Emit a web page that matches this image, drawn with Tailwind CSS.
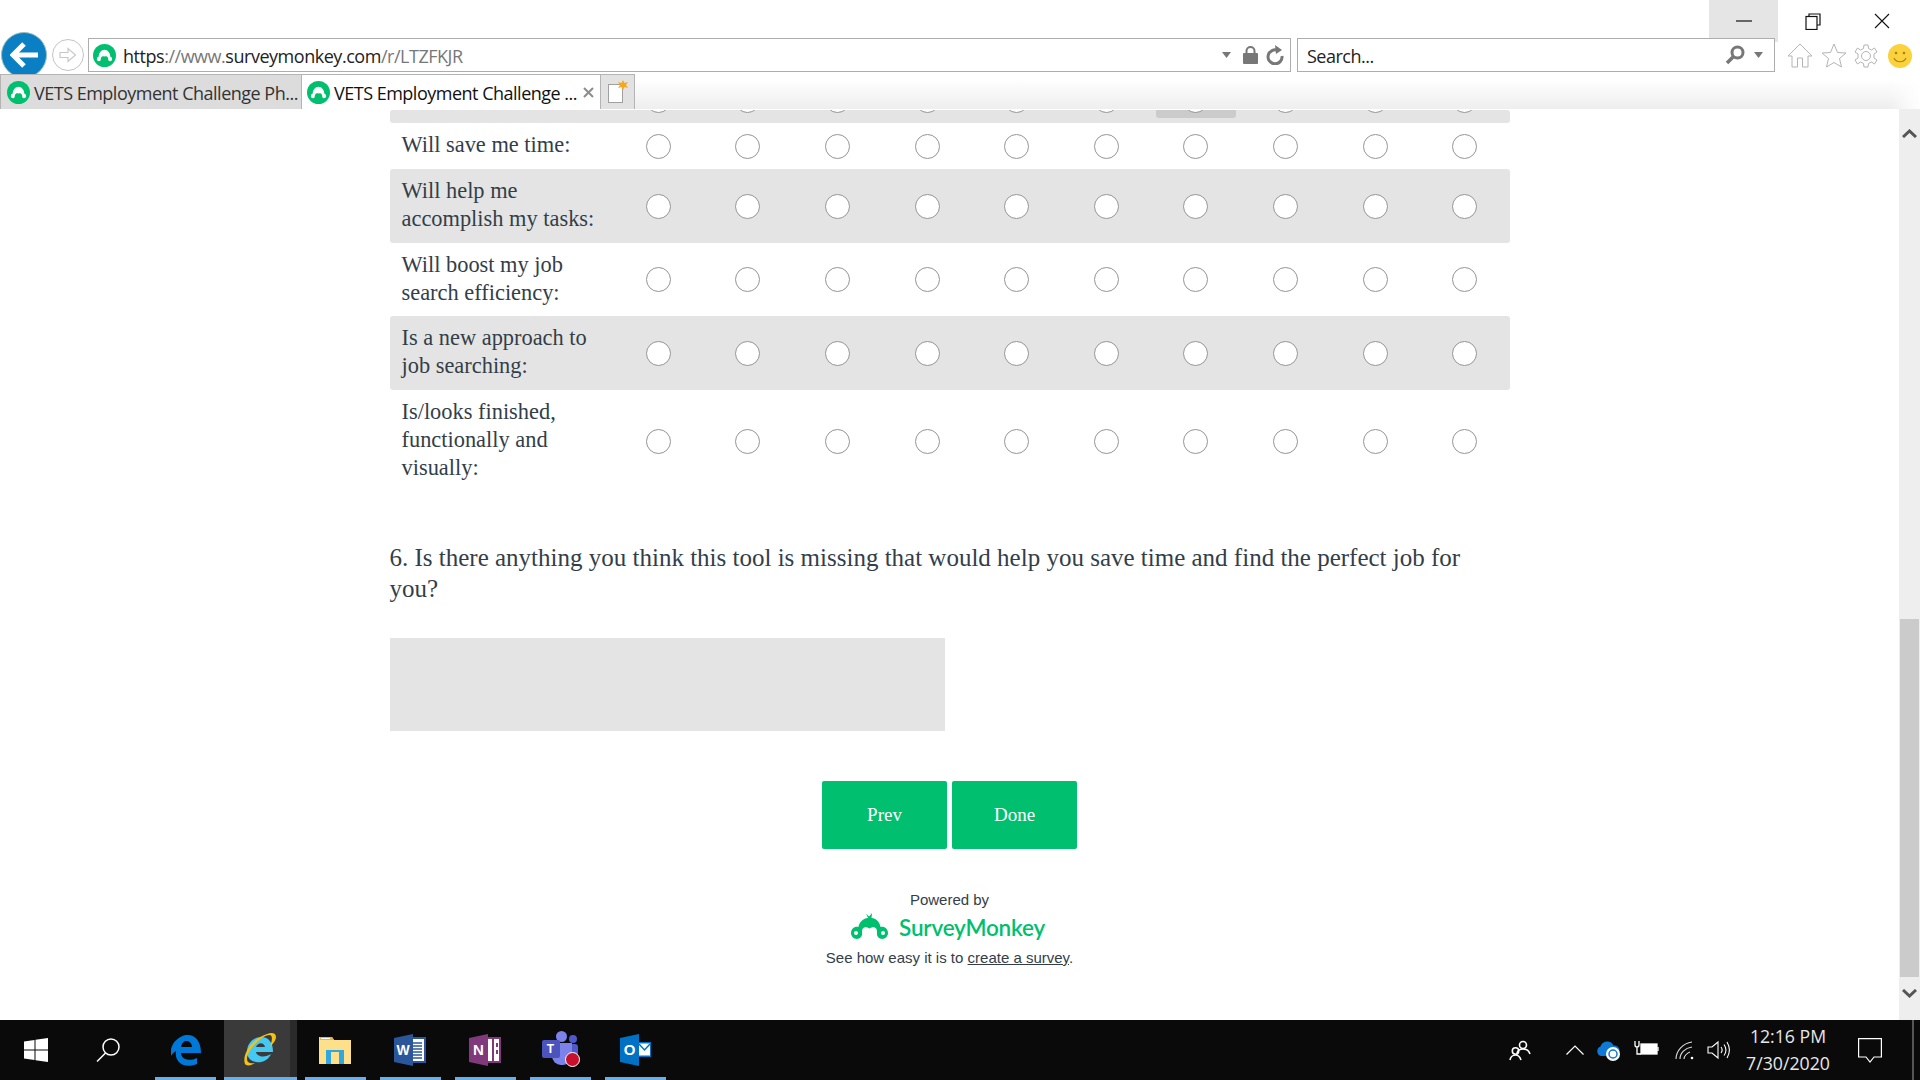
<!DOCTYPE html>
<html lang="en">
<head>
    <meta charset="UTF-8">
    <title>VETS Employment Challenge</title>
    <script src="https://cdn.jsdelivr.net/npm/@tailwindcss/browser@4"></script>
</head>
<body class="h-screen w-screen overflow-hidden flex flex-col bg-white font-['Open_Sans',sans-serif]">

    <!-- browser chrome -->
    <header class="h-[109px] shrink-0 flex flex-col bg-white relative z-10">
        <div class="h-[38px] flex justify-end pr-[4px]">
            <div class="w-[69px] h-[42px] bg-[#e5e5e5] flex items-center justify-center">
                <svg width="16" height="2"><path d="M0 1H16" stroke="#111" stroke-width="1.2"/></svg>
            </div>
            <div class="w-[69px] h-[42px] flex items-center justify-center">
                <svg width="16" height="17" fill="none" stroke="#111" stroke-width="1.2"><path d="M4 3V1H15V12H12"/><rect x="1" y="3.5" width="11" height="13"/></svg>
            </div>
            <div class="w-[69px] h-[42px] flex items-center justify-center">
                <svg width="16" height="16" stroke="#111" stroke-width="1.1"><path d="M1 1L15 15M15 1L1 15"/></svg>
            </div>
        </div>
        <div class="h-[36px] flex items-start relative z-0">
            <div class="w-[46px] h-[46px] rounded-full bg-[#0a7fc4] border border-[#9bb] flex items-center justify-center ml-px -mt-[6px] shrink-0">
                <svg width="28" height="26" fill="none" stroke="#fff" stroke-width="5"><path d="M14 2L3 13L14 24M3 13H28"/></svg>
            </div>
            <div class="w-[32px] h-[32px] rounded-full border border-[#c4c4c4] flex items-center justify-center ml-[5px] mt-[1px] shrink-0">
                <svg width="18" height="16" fill="none" stroke="#c8c8c8" stroke-width="1.2"><path d="M1 5.5H9V1.5L16.5 8L9 14.5V10.5H1Z"/></svg>
            </div>
            <div class="ml-[4px] w-[1203px] h-[34px] border border-[#adadad] bg-white flex items-center pl-[4px] relative z-10">
                <svg width="23" height="23" viewBox="0 0 24 24"><circle cx="12" cy="12" r="12" fill="#00bf6f"/><path d="M4 16a3 3 0 0 1 2-3C6 9 9 6 12 6s6 3 6 7a3 3 0 0 1 2 3c0 2-3 3-4 1 0-3-1-5-4-4-3-1-4 1-4 4-1 2-4 1-4-1Z" fill="#fff"/></svg>
                <span class="ml-[7px] pt-[2px] text-[18px] tracking-[-0.47px] text-[#777]"><span class="text-[#222]">https</span>://www.<span class="text-[#222]">surveymonkey.com</span>/r/LTZFKJR</span>
                <div class="ml-auto flex items-center pr-[6px]">
                    <svg width="9" height="6" fill="#777"><path d="M0 0H9L4.500 6Z"/></svg>
                    <svg class="ml-[12px]" width="15" height="18"><path d="M3.500 8V5a4 4 0 0 1 8 0v3" fill="none" stroke="#777" stroke-width="2"/><rect y="7" width="15" height="11" rx="1" fill="#777"/></svg>
                    <svg class="ml-[8px]" width="18" height="20" fill="none" stroke="#777" stroke-width="3"><path d="M12 5.500A7 7 0 1 0 16 11"/><path d="M9 0L16 5L10 9Z" fill="#777" stroke="none"/></svg>
                </div>
            </div>
            <div class="ml-[6px] w-[478px] h-[34px] border border-[#adadad] bg-white flex items-center pl-[9px] relative z-10">
                <span class="pt-[2px] text-[18px] tracking-[-0.5px] text-[#222]">Search...</span>
                <svg class="ml-auto" width="20" height="20" fill="none" stroke="#777"><circle cx="12.500" cy="7.500" r="5.500" stroke-width="3"/><path d="M8.500 11.500L2 18" stroke-width="3.500"/></svg>
                <svg class="ml-[9px] mr-[11px]" width="9" height="6" fill="#777"><path d="M0 0H9L4.500 6Z"/></svg>
            </div>
            <div class="ml-[12px] flex items-center gap-[7.500px] mt-[5px]">
                <svg width="26" height="25" fill="none" stroke="#b4b4b4"><path d="M13 1L1 13H5V24H10.500V15H15.500V24H21V13H25Z"/></svg>
                <svg width="26" height="25" fill="none" stroke="#b4b4b4"><path d="M13 1L16.500 9.500L25 10L18.500 15.500L20.500 24L13 19.500L5.500 24L7.500 15.500L1 10L9.500 9.500Z"/></svg>
                <svg width="24" height="24" fill="none" stroke="#b4b4b4"><circle cx="12" cy="12" r="4.500"/><path d="M10 1H14L14.500 4.500L17.500 6L20.500 4L23 8L20 10L20 14L23 16L20.500 20L17.500 18L14.500 19.500L14 23H10L9.500 19.500L6.500 18L3.500 20L1 16L4 14L4 10L1 8L3.500 4L6.500 6L9.500 4.500Z"/></svg>
                <svg width="24" height="24" class="ml-[2px]"><circle cx="12" cy="12" r="12" fill="#fbd13c"/><circle cx="8" cy="9" r="1.300" fill="#a5811c"/><circle cx="16" cy="9" r="1.300" fill="#a5811c"/><path d="M6 14c2 5 10 5 12 0" fill="none" stroke="#a5811c" stroke-width="1.200"/></svg>
            </div>
        </div>
        <nav class="h-[35px] flex relative z-20 bg-gradient-to-b from-white from-[15%] to-[#eeeeee]">
            <div class="w-[301px] h-full bg-[#dcdcdc] border-t border-l border-[#b4b4b4] flex items-center pl-[6px]">
                <svg width="23" height="23" viewBox="0 0 24 24"><circle cx="12" cy="12" r="12" fill="#00bf6f"/><path d="M4 16a3 3 0 0 1 2-3C6 9 9 6 12 6s6 3 6 7a3 3 0 0 1 2 3c0 2-3 3-4 1 0-3-1-5-4-4-3-1-4 1-4 4-1 2-4 1-4-1Z" fill="#fff"/></svg>
                <span class="ml-[4px] pt-[2px] text-[18px] tracking-[-0.5px] text-[#333] whitespace-nowrap">VETS Employment Challenge Ph...</span>
            </div>
            <div class="w-[299px] h-full bg-white border-t border-l border-[#b4b4b4] flex items-center pl-[5px]">
                <svg width="23" height="23" viewBox="0 0 24 24"><circle cx="12" cy="12" r="12" fill="#00bf6f"/><path d="M4 16a3 3 0 0 1 2-3C6 9 9 6 12 6s6 3 6 7a3 3 0 0 1 2 3c0 2-3 3-4 1 0-3-1-5-4-4-3-1-4 1-4 4-1 2-4 1-4-1Z" fill="#fff"/></svg>
                <span class="ml-[4px] pt-[2px] text-[18px] tracking-[-0.5px] text-[#111] whitespace-nowrap">VETS Employment Challenge ...</span>
                <svg class="ml-auto mr-[6px]" width="11" height="11" stroke="#8c8c8c" stroke-width="2"><path d="M1 1L10 10M10 1L1 10"/></svg>
            </div>
            <div class="w-[35px] h-full bg-[#e2e2e2] border-t border-x border-[#b4b4b4] flex items-center justify-center">
                <svg width="20" height="24"><rect x="0.500" y="4.500" width="14" height="18" fill="#fff" stroke="#a0a0a0"/><path d="M15 0L16.500 3L20 2L18 5L20 8L16.500 7L15 10L13.500 7L10 8L12 5L10 2L13.500 3Z" fill="#f6a81c"/></svg>
            </div>
            <div class="absolute right-0 top-0 w-[30px] h-full bg-gradient-to-r from-transparent to-white"></div>
        </nav>
    </header>

    <!-- page with scrollbar -->
    <div class="flex-1 min-h-0 flex">
        <main class="flex-1 min-w-0 overflow-hidden pt-px">
            <div class="w-[1120px] mx-auto font-['Liberation_Serif',serif] text-[#333e48]">
                <div id="matrix"></div>
                <p class="mt-[50px] text-[25px] leading-[31px]">6. Is there anything you think this tool is missing that would help you save time and find the perfect job for you?</p>
                <div class="mt-[34px] w-[555px] h-[93px] bg-[#e4e4e4]"></div>
                <div class="mt-[50px] flex justify-center gap-[5px]">
                    <button class="w-[125px] h-[68px] rounded-[2px] bg-[#00bf6f] text-white text-[19px]">Prev</button>
                    <button class="w-[125px] h-[68px] rounded-[2px] bg-[#00bf6f] text-white text-[19px]">Done</button>
                </div>
                <div class="mt-[41px] flex flex-col items-center font-['Liberation_Sans',sans-serif] text-[15px] leading-[20px]">
                    <span>Powered by</span>
                    <div class="h-[29px] mt-[2px] mr-[3px] flex items-center gap-[11px]">
                        <svg width="37" height="29" viewBox="0 0 37 29" fill="#00bf6f"><path d="M17 6L15 1.500L18 4.500L21 1L20.500 6C26 6.500 29 11 29.500 15C33.500 14 37 17 37 21C37 25 33 28 29 26.500C26.500 25.500 25.500 23 26 20C26.500 16 23 13.500 18.500 16.500C14 13.500 10.500 16 11 20C11.500 23 10.500 25.500 8 26.500C4 28 0 25 0 21C0 17 3.500 14 7.500 15C8 11 11.500 6.500 17 6Z"/><circle cx="5" cy="21" r="2" fill="#fff"/><circle cx="32" cy="21" r="2" fill="#fff"/></svg>
                        <span class="pt-[4px] font-['Lato',sans-serif] font-semibold text-[22.500px] leading-none text-[#00bf6f] tracking-[-0.2px]">SurveyMonkey</span>
                    </div>
                    <span class="mt-[7px]">See how easy it is to <a href="#" class="underline">create a survey</a>.</span>
                </div>
            </div>
        </main>
        <aside class="w-[21px] shrink-0 bg-[#eeeeee] flex flex-col items-center">
            <div class="h-[49px] w-full flex items-center justify-center">
                <svg width="15" height="9" fill="none" stroke="#555" stroke-width="3"><path d="M1 8L7.500 2L14 8"/></svg>
            </div>
            <div class="mt-[461px] w-[19px] h-[358px] bg-[#cbcbcb]"></div>
            <div class="h-[32px] w-full flex items-center justify-center">
                <svg width="15" height="9" fill="none" stroke="#555" stroke-width="3"><path d="M1 1L7.500 7L14 1"/></svg>
            </div>
        </aside>
    </div>

    <!-- windows taskbar -->
    <footer class="h-[60px] shrink-0 bg-[#0a0a0a] flex items-center text-[#e8e8e8] relative">
        <div class="w-[24px] ml-[24px] shrink-0 flex">
            <svg width="24" height="24" fill="#fff"><path d="M0 3.500L10.500 2V11.500H0ZM11.500 1.800L24 0V11.500H11.500ZM0 12.500H10.500V22L0 20.500ZM11.500 12.500H24V24L11.500 22.200Z"/></svg>
        </div>
        <div class="ml-[48px] w-[24px] shrink-0 flex">
            <svg width="24" height="24" fill="none" stroke="#fff" stroke-width="1.500"><circle cx="15" cy="9" r="8"/><path d="M9.500 15L1 23.500"/></svg>
        </div>
        <div class="ml-[35px] w-[61px] h-full shrink-0 flex items-center justify-center border-b-[3px] border-[#6aaee8] pt-[3px]">
            <svg width="30" height="32" viewBox="0 0 30 32"><path d="M0 15C2 7 9 2 15 1C24 0 30 7 30 19H10C10 25 18 28 26 24V30C14 35 3 29 5 17C3 18 1 20 0 22C0 20 0 17 0 15ZM10 13H21C21 8 17 6.500 14 7C12 8 10.500 10 10 13Z" fill="#0078d7"/></svg>
        </div>
        <div class="ml-[8px] h-full shrink-0 flex border-b-[3px] border-[#6aaee8]">
            <div class="w-[66px] h-full bg-[#3a3a3a] flex items-center justify-center pl-[5px]">
                <svg width="34" height="34" viewBox="0 0 34 34"><path d="M4 20C4 11 11 5 18 5C26 5 30 11 30 20H13C14 25 22 26 28 22C25 29 18 31 13 30C7 29 4 25 4 20ZM13 15H22C21 10 15 10 13 15Z" fill="#45c8f2"/><path d="M2 32C-1 25 6 8 24 2C29 0 33 1 33 5C33 8 30 12 27 15C29 9 30 4 27 3C20 2 4 18 4 27C4 31 8 32 12 31C8 34 3 34 2 32Z" fill="#f3c11b"/></svg>
            </div>
            <div class="w-[7px] h-full bg-[#2a2a2a]"></div>
        </div>
        <div class="ml-[8px] w-[61px] h-full shrink-0 flex items-center justify-center border-b-[3px] border-[#6aaee8] pt-[3px] pr-[2px]">
            <svg width="32" height="32" viewBox="0 0 32 32"><path d="M0 3H13L15 6H32V30H0Z" fill="#ffe08a"/><path d="M1 3H13L15 6H1Z" fill="#e2b44a"/><path d="M2 4H11V5H2Z" fill="#fff"/><path d="M7 22V16H25V22H20V18H12V30H7ZM20 22H25V30H20Z" fill="#2fa7e0"/></svg>
        </div>
        <div class="ml-[14px] w-[61px] h-full shrink-0 flex items-center justify-center border-b-[3px] border-[#6aaee8] pt-[3px] pr-[2px]">
            <svg width="32" height="32" viewBox="0 0 32 32"><rect x="13" y="4" width="18" height="24" fill="#fff" stroke="#2b579a" stroke-width="2"/><path d="M19 9H28M19 12H28M19 15H28M19 18H28M19 21H28M19 24H28" stroke="#2b579a" stroke-width="1.500"/><path d="M0 4L19 0V32L0 28Z" fill="#2b579a"/><text x="9" y="21" text-anchor="middle" fill="#fff" font-size="14" font-weight="700" font-family="Liberation Sans">W</text></svg>
        </div>
        <div class="ml-[14px] w-[61px] h-full shrink-0 flex items-center justify-center border-b-[3px] border-[#6aaee8] pt-[3px] pr-[1px]">
            <svg width="32" height="32" viewBox="0 0 32 32"><rect x="13" y="4" width="18" height="24" fill="#fff" stroke="#80397b" stroke-width="2"/><path d="M24 4V28M28 9V13M28 16V20" stroke="#80397b" stroke-width="2"/><path d="M0 4L19 0V32L0 28Z" fill="#80397b"/><text x="9.500" y="21" text-anchor="middle" fill="#fff" font-size="15" font-weight="700" font-family="Liberation Sans">N</text></svg>
        </div>
        <div class="ml-[14px] w-[61px] h-full shrink-0 flex items-center justify-center border-b-[3px] border-[#6aaee8]">
            <div class="w-[38px] h-[36px] relative">
                <div class="absolute left-[14px] top-0 w-[11px] h-[11px] rounded-full bg-[#7b83eb]"></div>
                <div class="absolute left-[27px] top-[4px] w-[8px] h-[8px] rounded-full bg-[#5059c9]"></div>
                <div class="absolute left-[24px] top-[13px] w-[12px] h-[14px] rounded-[3px] bg-[#5059c9]"></div>
                <div class="absolute left-[10px] top-[12px] w-[20px] h-[22px] rounded-b-[9px] bg-[#7b83eb]"></div>
                <div class="absolute left-0 top-[9px] w-[18px] h-[18px] rounded-[2px] bg-[#4b53bc] flex items-center justify-center text-white text-[12px] font-bold font-['Liberation_Sans',sans-serif]">T</div>
                <div class="absolute left-[23px] top-[21px] w-[15px] h-[15px] rounded-full bg-[#c8102e] border border-white"></div>
            </div>
        </div>
        <div class="ml-[14px] w-[61px] h-full shrink-0 flex items-center justify-center border-b-[3px] border-[#6aaee8] pt-[3px]">
            <svg width="32" height="32" viewBox="0 0 32 32"><rect x="13" y="8" width="18" height="15" fill="#0072c6"/><path d="M19 9.500H30V21.500H19Z" fill="#fff"/><path d="M19 10L24.500 16L30 10" fill="none" stroke="#0072c6" stroke-width="1.500"/><path d="M0 4L19 0V32L0 28Z" fill="#0072c6"/><text x="9.500" y="21" text-anchor="middle" fill="#fff" font-size="15" font-weight="700" font-family="Liberation Sans">O</text></svg>
        </div>

        <!-- tray -->
        <div class="ml-auto flex items-center">
            <svg width="22" height="22" fill="none" stroke="#fff" stroke-width="1.600"><circle cx="14" cy="6" r="3.500"/><path d="M8 14c1-3 3-4 6-4s6 2 7 5"/><circle cx="6.500" cy="12" r="3.200"/><path d="M1 21c.5-3 3-5 5.500-5S11 18 12 21"/></svg>
            <svg class="ml-[35px]" width="18" height="10" fill="none" stroke="#fff" stroke-width="1.200"><path d="M0.500 9.500L9 1L17.500 9.500"/></svg>
            <svg class="ml-[12.500px]" width="25" height="22"><path d="M5 17a5 5 0 0 1-.5-9.500a7 7 0 0 1 13-1A5 5 0 0 1 19 17Z" fill="#0f78d4"/><circle cx="17" cy="15" r="7" fill="#fff"/><circle cx="17" cy="15" r="4" fill="none" stroke="#0f78d4" stroke-width="1.500"/></svg>
            <svg class="ml-[12.500px] mb-[4px]" width="25" height="16" fill="none" stroke="#fff" stroke-width="1.300"><path d="M1 1V5a2 2 0 0 0 4 0V1M3 7V14H7"/><rect x="7" y="4" width="16" height="10" fill="#fff"/><path d="M24 7V11"/></svg>
            <svg class="ml-[16.500px]" width="20" height="20" fill="none" stroke="#ddd" stroke-width="1.100"><path d="M1 19C1 11 8 3 17 2M5 19C5 13 10 8 17 7M9 19C9 16 12 13 15 12"/><circle cx="17" cy="18" r="1.300" fill="#fff" stroke="none"/></svg>
            <svg class="ml-[11.500px]" width="23" height="20" fill="none" stroke="#fff" stroke-width="1.100"><path d="M1 7H5L11 2V18L5 13H1Z"/><path d="M14 7C15.500 9 15.500 11 14 13M17 4.500C19.500 8 19.500 12 17 15.500M20 2C23 7 23 13 20 18"/></svg>
            <div class="ml-[12.500px] w-[92px] flex flex-col items-center text-[17.700px] leading-[27px] whitespace-nowrap">
                <span>12:16 PM</span>
                <span>7/30/2020</span>
            </div>
            <svg class="ml-[24px]" width="24" height="25" fill="none" stroke="#fff" stroke-width="1.200"><path d="M0.600 0.600H23.400V19H16L12 24L8 19H0.600Z"/></svg>
            <div class="ml-[30px] mr-[6px] w-[2px] h-[60px] bg-[#555]"></div>
        </div>
    </footer>

    <script>
        // survey rows: label, height of the row, striped or not
        const rows = [
            { label: '', height: 'h-[13px]', striped: true, partial: true },
            { label: 'Will save me time:', height: 'h-[46px]' },
            { label: 'Will help me<br>accomplish my tasks:', height: 'h-[74px]', striped: true },
            { label: 'Will boost my job<br>search efficiency:', height: 'h-[73px]' },
            { label: 'Is a new approach to<br>job searching:', height: 'h-[74px]', striped: true },
            { label: 'Is/looks finished,<br>functionally and<br>visually:', height: 'h-[102px]' }
        ];

        const matrix = document.getElementById('matrix');
        rows.forEach(row => {
            const rowEl = document.createElement('div');
            rowEl.className = 'grid grid-cols-[224px_repeat(10,1fr)] items-center overflow-hidden rounded-[3px] ' + row.height + (row.striped ? ' bg-[#e4e4e4]' : '');

            const label = document.createElement('div');
            label.className = 'pl-[12px] pb-[2px] text-[22.400px] leading-[28px]';
            label.innerHTML = row.label;
            rowEl.appendChild(label);

            for (let i = 0; i < 10; i++) {
                const cell = document.createElement('div');
                cell.className = 'flex justify-center';
                const radio = document.createElement('div');
                radio.className = 'w-[25px] h-[25px] rounded-full border-[1.500px] border-[#959595] bg-white shrink-0';
                if (row.partial) {
                    cell.className = 'flex justify-center h-[13px] items-end';
                    radio.className = 'w-[25px] h-[25px] rounded-full border-[1.500px] border-[#959595] bg-white shrink-0 -translate-y-[10px]';
                    if (i === 6) cell.className = 'flex justify-center h-[8px] mx-[5px] self-start items-end bg-[#cbcbcb] rounded-b-[3px]';
                    if (i === 6) radio.className = 'w-[25px] h-[25px] rounded-full border-[1.500px] border-[#959595] bg-white shrink-0 -translate-y-[5px]';
                }
                cell.appendChild(radio);
                rowEl.appendChild(cell);
            }
            matrix.appendChild(rowEl);
        });
    </script>
</body>
</html>
